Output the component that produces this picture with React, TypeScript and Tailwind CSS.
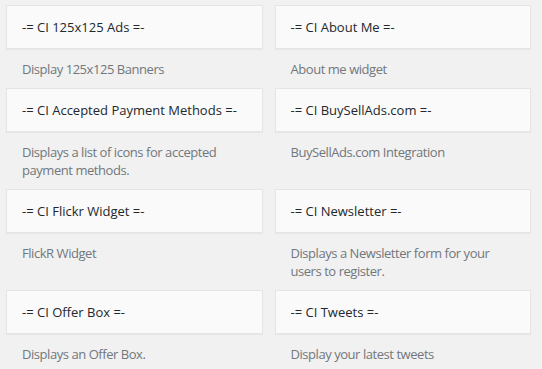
import React from 'react';

type Widget = { title: string; description: string };

const widgets: Widget[] = [
  { title: '-= CI 125x125 Ads =-', description: 'Display 125x125 Banners' },
  { title: '-= CI About Me =-', description: 'About me widget' },
  { title: '-= CI Accepted Payment Methods =-', description: 'Displays a list of icons for accepted payment methods.' },
  { title: '-= CI BuySellAds.com =-', description: 'BuySellAds.com Integration' },
  { title: '-= CI Flickr Widget =-', description: 'FlickR Widget' },
  { title: '-= CI Newsletter =-', description: 'Displays a Newsletter form for your users to register.' },
  { title: '-= CI Offer Box =-', description: 'Displays an Offer Box.' },
  { title: '-= CI Tweets =-', description: 'Display your latest tweets' },
];

const WidgetItem: React.FC<{ widget: Widget }> = ({ widget }) => (
  <div>
    {/* Draggable title bar */}
    <div className="h-[44px] flex items-center px-[15px] bg-[#fafafa] border border-[#e5e5e5] shadow-[0_1px_1px_rgba(0,0,0,0.04)]">
      <h3 className="text-[13px] leading-none font-medium text-[#23282d]">{widget.title}</h3>
    </div>
    <p className="pl-[16px] pr-[15px] pt-[11px] pb-[10px] text-[13px] leading-[18px] tracking-[-0.45px] text-[#72777c]">
      {widget.description}
    </p>
  </div>
);

export default function App() {
  return (
    <div
      className="w-[542px] h-[369px] overflow-hidden bg-[#f1f1f1] pt-[5px] pl-[6px] pr-[11px]"
      style={{ fontFamily: '"Open Sans", "Noto Sans", sans-serif' }}
    >
      <div className="grid grid-cols-2 gap-x-[12px]">
        {widgets.map((w) => (
          <WidgetItem key={w.title} widget={w} />
        ))}
      </div>
    </div>
  );
}
